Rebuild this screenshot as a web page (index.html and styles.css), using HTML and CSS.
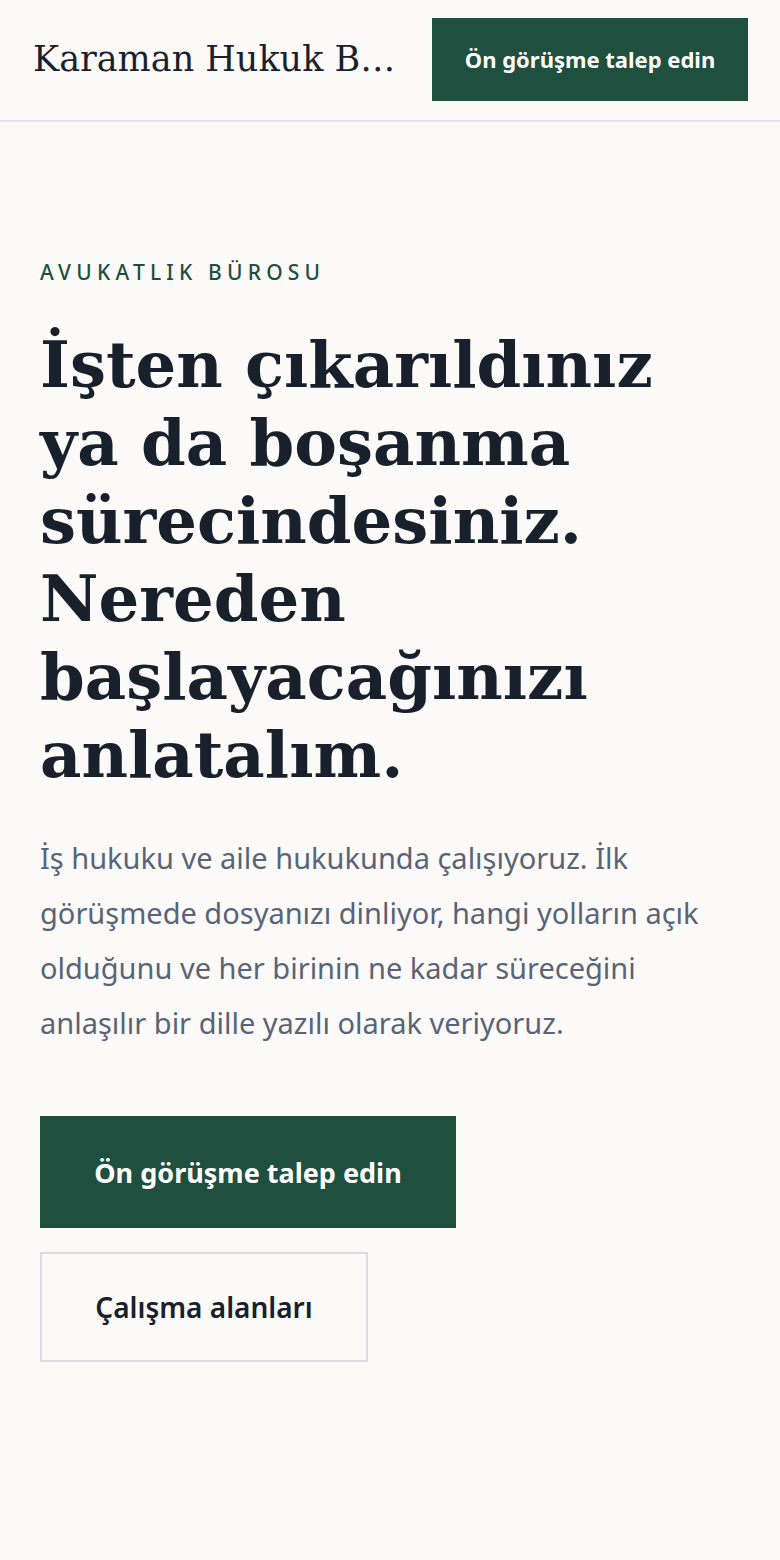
FILE: index.html
```html
<!DOCTYPE html>
<html lang="tr">
<head>
<meta charset="utf-8">
<title>Karaman Hukuk Bürosu</title>
<link rel="stylesheet" href="styles.css">
</head>
<body>
<header class="site-header">
  <div class="brand">Karaman Hukuk Bürosu</div>
  <a class="btn btn-primary btn-header" href="#">Ön görüşme talep edin</a>
</header>
<main class="hero">
  <p class="eyebrow">AVUKATLIK BÜROSU</p>
  <h1 class="title">İşten çıkarıldınız ya da boşanma sürecindesiniz. Nereden başlayacağınızı anlatalım.</h1>
  <p class="lead">İş hukuku ve aile hukukunda çalışıyoruz. İlk görüşmede dosyanızı dinliyor, hangi yolların açık olduğunu ve her birinin ne kadar süreceğini anlaşılır bir dille yazılı olarak veriyoruz.</p>
  <div class="actions">
    <a class="btn btn-primary btn-large" href="#">Ön görüşme talep edin</a>
    <a class="btn btn-outline btn-large" href="#">Çalışma alanları</a>
  </div>
</main>
</body>
</html>
```
FILE: styles.css
```css
* { box-sizing: border-box; }
html, body { margin: 0; padding: 0; }
body {
  background: #fbfaf9;
  color: #1a212d;
  font-family: "Noto Sans", Lato, sans-serif;
}
.site-header {
  display: flex;
  align-items: center;
  justify-content: space-between;
  gap: 34px;
  height: 122px;
  padding: 0 32px 2px 33px;
  border-bottom: 2px solid #e3e3e9;
}
.brand {
  font-family: "DejaVu Serif", "Liberation Serif", serif;
  font-size: 35px;
  color: #1a212d;
  white-space: nowrap;
  overflow: hidden;
  text-overflow: ellipsis;
  min-width: 0;
  flex: 1;
}
.btn {
  display: inline-flex;
  align-items: center;
  justify-content: center;
  text-decoration: none;
  font-family: "Noto Sans", Lato, sans-serif;
  font-weight: 700;
}
.btn-primary { background: #1f4f3e; color: #ffffff; }
.btn-header {
  flex: none;
  width: 316px;
  height: 83px;
  font-size: 22px;
}
.hero {
  padding: 140px 40px 100px 40px;
}
.eyebrow {
  margin: 0 0 44px 0;
  font-size: 21px;
  line-height: 20px;
  letter-spacing: 5.2px;
  color: #1f4f3e;
  font-weight: 500;
}
.title {
  margin: 0 0 36px 0;
  font-family: "DejaVu Serif", "Liberation Serif", serif;
  font-weight: 700;
  font-size: 64px;
  line-height: 78px;
  color: #18202c;
}
.lead {
  margin: 0 0 66px 0;
  max-width: 700px;
  font-size: 29px;
  line-height: 55px;
  color: #5a6478;
}
.actions {
  display: flex;
  flex-direction: column;
  align-items: flex-start;
  gap: 24px;
}
.btn-large {
  height: 112px;
  font-size: 27px;
}
.actions .btn-primary { width: 416px; }
.btn-outline {
  width: 328px;
  height: 110px;
  border: 2px solid #dcdce5;
  color: #18202c;
  font-weight: 600;
  font-size: 28px;
}
```
